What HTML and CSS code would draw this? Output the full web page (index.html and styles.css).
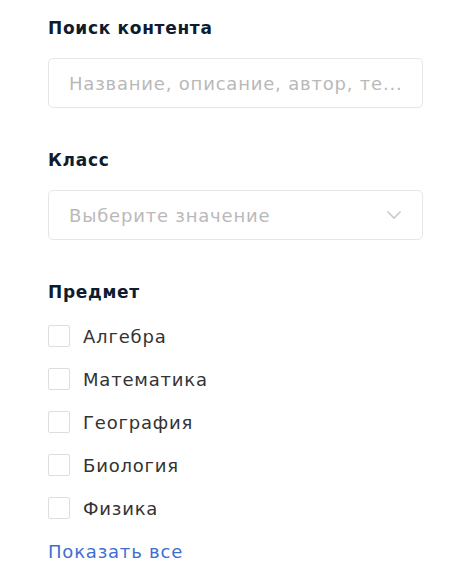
FILE: index.html
```html
<!DOCTYPE html>
<html lang="ru">
<head>
<meta charset="utf-8">
<link rel="stylesheet" href="styles.css">
</head>
<body>
<div class="filters">
  <section class="group">
    <h3 class="title">Поиск контента</h3>
    <div class="field"><span class="placeholder">Название, описание, автор, те...</span></div>
  </section>
  <section class="group">
    <h3 class="title">Класс</h3>
    <div class="field select">
      <span class="placeholder">Выберите значение</span>
      <svg class="chevron" width="16" height="10" viewBox="0 0 16 10"><path d="M1.5 1.5 L8 8 L14.5 1.5" fill="none" stroke="#c9c9c9" stroke-width="1.6"/></svg>
    </div>
  </section>
  <section class="group">
    <h3 class="title subj">Предмет</h3>
    <ul class="list">
      <li class="item"><span class="box"></span><span>Алгебра</span></li>
      <li class="item"><span class="box"></span><span>Математика</span></li>
      <li class="item"><span class="box"></span><span>География</span></li>
      <li class="item"><span class="box"></span><span>Биология</span></li>
      <li class="item"><span class="box"></span><span>Физика</span></li>
    </ul>
    <a class="more" href="#">Показать все</a>
  </section>
</div>
</body>
</html>
```
FILE: styles.css
```css
html, body { margin: 0; padding: 0; background: #fff; }
body { font-family: "DejaVu Sans", "Noto Sans", sans-serif; }
.filters { padding: 18px 27px 0 48px; display: flex; flex-direction: column; gap: 42px; }
.group { display: flex; flex-direction: column; }
.title { margin: 0 0 20px; font-size: 17px; line-height: 20px; font-weight: 700; letter-spacing: 0.7px; color: #0d1c2e; }
.title.subj { margin-bottom: 23px; }
.field { box-sizing: border-box; height: 50px; border: 1px solid #e6e6e6; border-radius: 5px; display: flex; align-items: center; padding: 0 20px; }
.placeholder { font-size: 18px; letter-spacing: 0.8px; color: #b9b9b9; white-space: nowrap; }
.select { justify-content: space-between; padding-right: 20px; }
.chevron { display: block; }
.list { list-style: none; margin: 0; padding: 0; display: flex; flex-direction: column; gap: 21px; }
.item { display: flex; align-items: center; gap: 13px; height: 22px; font-size: 18px; letter-spacing: 0.8px; color: #333; }
.box { box-sizing: border-box; width: 22px; height: 22px; border: 1px solid #dedede; border-radius: 2px; }
.more { margin-top: 23px; font-size: 18px; letter-spacing: 0.8px; line-height: 20px; color: #3d6fd3; text-decoration: none; }
```
